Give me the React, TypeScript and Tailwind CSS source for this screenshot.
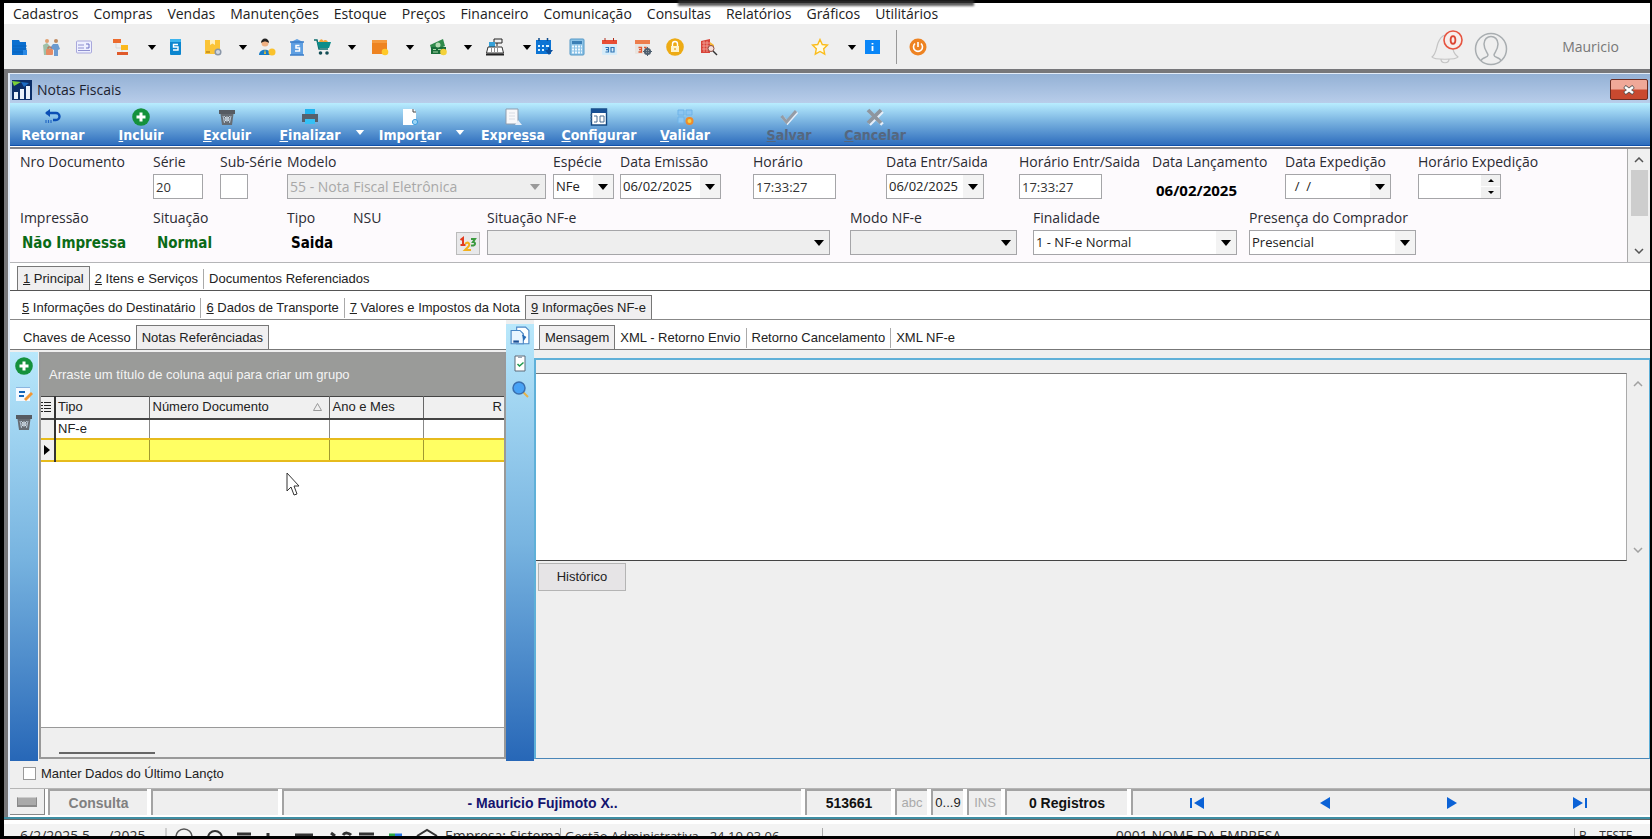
import { useState, type ReactNode } from 'react';
import { clsx } from 'clsx';

const menus = [
    'Cadastros', 'Compras', 'Vendas', 'Manutenções', 'Estoque', 'Preços',
    'Financeiro', 'Comunicação', 'Consultas', 'Relatórios', 'Gráficos', 'Utilitários',
];

const uiFont = "font-['Open_Sans','Noto_Sans',sans-serif]";
const sansFont = "font-['Liberation_Sans',Arial,sans-serif]";
const boldFont = "font-['DejaVu_Sans_Condensed','DejaVu_Sans',sans-serif]";

function Svg({ children, className = 'size-[18px]' }: { children: ReactNode; className?: string }) {
    return (
        <svg viewBox="0 0 18 18" className={clsx('block shrink-0', className)} fill="none" aria-hidden="true">
            {children}
        </svg>
    );
}

function Arrow({ className = 'text-black', small = false }: { className?: string; small?: boolean }) {
    return (
        <svg viewBox={small ? '-1 0 12 6' : '0 0 10 6'} className={clsx('block w-[10px] shrink-0', small ? 'h-[5px]' : 'h-[6px]', className)} aria-hidden="true">
            <path d="M0 0h10L5 6z" fill="currentColor" />
        </svg>
    );
}

const icons = {
    folder: <Svg><path d="M2 2h7l1 2h6v13H2z" fill="#0a6fd0" /><path d="M3 8h14M3 11h14M3 14h14" stroke="#0b5bb0" strokeWidth=".7" /><path d="M13 12h4v5h-4z" fill="#2b8ae6" /></Svg>,
    people: <Svg><circle cx="5" cy="3" r="2" fill="#e0a070" /><circle cx="14" cy="3" r="2" fill="#c08a60" /><path d="M1 7l4-2 3 3v3H6v6H2z" fill="#9fc0a8" /><path d="M11 6h5l2 5-2 1v6h-4v-6l-4-2z" fill="#6d9bd0" /><rect x="4" y="11" width="7" height="6" rx="1" fill="#e78b63" /><path d="M6 11V9h3v2" stroke="#b9674a" /></Svg>,
    card: <Svg><rect x="1.5" y="3" width="15" height="12" rx="1" fill="#eef0ff" stroke="#a9a8dc" /><path d="M3 7h6M3 10h6M3 12.500h12" stroke="#8f90d0" /><path d="M11 6h3v4h-3" stroke="#6f72c4" /></Svg>,
    tree: <Svg><path d="M4 4v6h6M10 10v6" stroke="#d9d9d9" /><rect x="1" y="1" width="8" height="4" fill="#ec6b2d" /><rect x="9" y="7" width="7" height="5" fill="#fbb81c" /><rect x="5" y="14" width="11" height="3" fill="#e05a2a" /></Svg>,
    phone: <Svg><rect x="4" y="1" width="11" height="16" rx="1" fill="#0c86cf" /><rect x="4" y="1" width="11" height="3" fill="#3cb4ee" /><path d="M12 6.500H7.500V9H12v3H7" stroke="#fff" strokeWidth="1.400" /></Svg>,
    box: <Svg><path d="M1 2h15v14H1z" fill="#fbc437" /><path d="M6 2h5v5L8.500 5.500 6 7z" fill="#fff0c0" /><path d="M3 13v2M5 13v2" stroke="#9a6a10" /><circle cx="14" cy="14" r="2.800" fill="#d3d9e2" stroke="#8a97a8" strokeWidth="1.500" /></Svg>,
    person: <Svg><circle cx="7" cy="5" r="3.500" fill="#efb184" /><path d="M3 5c0-6 8-6 8 0-3-2-5-2-8 0z" fill="#222" /><path d="M1 17c0-7 12-7 12 0z" fill="#147bc8" /><path d="M7 11l-1 5h2z" fill="#f2c430" /><circle cx="14" cy="14" r="3.500" fill="#fac22c" /></Svg>,
    bank: <Svg><path d="M3 4l6-3 6 3v13H3z" fill="#5e9fe2" /><path d="M2 4h14M2 17h14" stroke="#3c7fc9" strokeWidth="1.500" /><path d="M11.500 7.500H8V10h3.500v3H7" stroke="#fff" strokeWidth="1.500" /></Svg>,
    cart: <Svg><path d="M1 2h3l2 9h9" stroke="#0d6d6d" strokeWidth="1.500" /><path d="M4 4h14l-2 6H6z" fill="#0d8d8a" /><path d="M6 4c1-4 4-3 4-1 2-2 4-1 5 1z" fill="#f2a33a" /><circle cx="7.500" cy="15" r="1.800" fill="#134d55" /><circle cx="14" cy="15" r="1.800" fill="#134d55" /></Svg>,
    note: <Svg><rect x="1" y="2" width="15" height="14" fill="#ee8320" /><path d="M1 2h15v3H1z" fill="#f59a3e" /><circle cx="14" cy="14" r="3.300" fill="#ffc928" /></Svg>,
    money: <Svg><path d="M1 7l13-6 2 7-13 6z" fill="#2f8a4b" /><path d="M2 9h15v7H2z" fill="#186d39" /><circle cx="9" cy="7" r="2.500" fill="#b3dbb2" /><path d="M4 11.500h3M4 14h5M9 11.500h3" stroke="#a9d8a8" /><circle cx="14.500" cy="14" r="3.300" fill="#f3d13a" /></Svg>,
    register: <Svg><path d="M8 1h8v4H8zM11 5v3" stroke="#222" /><path d="M3 4h6v6H3z" fill="#35a1d9" /><path d="M2 9h14l1.500 6H.5z" fill="#fff" stroke="#333" /><path d="M5 11h1M8 11h1M11 11h1M5 13h1M8 13h1M11 13h1" stroke="#222" /><path d="M0 16.500h18" stroke="#222" strokeWidth="2" /></Svg>,
    calendar: <Svg><path d="M1 2h15v14H1z" fill="#0c74d4" /><path d="M4 0v3M12.500 0v3" stroke="#0a4a8c" strokeWidth="1.500" /><path d="M3 7h2v2H3zM7 7h2v2H7zM11 7h3v2h-3zM3 11h2v2H3zM7 11h2v2H7z" fill="#d9f1ff" /><path d="M10 12h3V9.500h2V12h3l-4 5z" fill="#0b4f9d" /></Svg>,
    calc: <Svg><rect x="2" y="1" width="14" height="16" rx="1" fill="#8cc2e6" stroke="#5599c7" /><rect x="4" y="3" width="10" height="3" fill="#3b7fb6" /><path d="M4 8.500h10M4 11.500h10M4 14.500h10" stroke="#eef8ff" strokeWidth="1.800" strokeDasharray="2 1" /></Svg>,
    cal30: <Svg><rect x="1" y="2" width="15" height="15" rx="1" fill="#d6ecf9" /><path d="M1 2h15v4H1z" fill="#e84e35" /><path d="M4 0v3M12.500 0v3" stroke="#b22e1c" /><path d="M4.500 9.500h3v4.500h-3M5 11.700h2.500M10 9.500h3V14h-3z" stroke="#2e74b5" strokeWidth="1.200" /></Svg>,
    calGear: <Svg><rect x="1" y="2" width="15" height="14" rx="1" fill="#e9e4df" /><path d="M1 2h15v4H1z" fill="#ed7d4b" /><path d="M4.500 9.500h3v4.500h-3M5 11.700h2.500M10 9.500h2V12" stroke="#e4572e" strokeWidth="1.300" /><circle cx="13.500" cy="13.500" r="2.500" stroke="#4f6070" strokeWidth="2.200" /><path d="M13.500 9v9M9 13.500h9" stroke="#4f6070" strokeWidth="1" /></Svg>,
    lock: <Svg><circle cx="9" cy="9" r="8.800" fill="#edab15" /><rect x="5" y="8" width="8" height="6" fill="#fff3c9" /><path d="M6.500 8V6a2.500 2.500 0 015 0v2" stroke="#fff" strokeWidth="1.400" /><path d="M9 10v2" stroke="#d69305" /></Svg>,
    search: <Svg><path d="M1 3l9-2v14H1z" fill="#d8453a" /><path d="M2 5h8M2 8h8M2 11h8M4 3v11M7 3v11" stroke="#f6aaa0" strokeWidth=".8" /><path d="M10 4l4 3v3h-4z" fill="#f7b632" /><circle cx="11" cy="10.500" r="3" fill="#f7ded9" stroke="#8a4a40" /><path d="M13 13l4 4" stroke="#333" strokeWidth="1.500" /></Svg>,
    star: <Svg><path d="M9 1.500l2.300 5 5.200.6-3.800 3.700 1 5.400L9 13.500l-4.700 2.700 1-5.400L1.500 7.100l5.200-.6z" fill="#fffbe6" stroke="#fbbc1b" strokeWidth="1.400" /></Svg>,
    info: <Svg><rect x="1" y="2" width="15" height="14" fill="#0a86f7" /><path d="M8.500 5v1.600M8.500 8v5" stroke="#fff" strokeWidth="1.800" /></Svg>,
    power: <Svg><circle cx="9" cy="9" r="8.500" fill="#ee8322" /><path d="M6 5.500a4.500 4.500 0 106 0" stroke="#fff" strokeWidth="1.600" /><path d="M9 4v5" stroke="#fff" strokeWidth="1.600" /></Svg>,
    undo: <Svg><path d="M2 5h10a3.500 3.500 0 010 7H9" stroke="#0b4eb5" strokeWidth="2.400" /><path d="M6 1L1 5l5 4z" fill="#0b4eb5" /><path d="M2 12v3M4.500 12v3M7 12v3" stroke="#2468c4" strokeWidth="1.200" /></Svg>,
    plus: <Svg><circle cx="9" cy="9" r="8.800" fill="#15913c" /><path d="M9 4.500v9M4.500 9h9" stroke="#fff" strokeWidth="3" /></Svg>,
    trash: <Svg><rect x="1" y="2" width="16" height="4" fill="#565b62" /><path d="M2.500 6h13L14 17H4z" fill="#666c73" /><path d="M5 8l1.500 7M13 8l-1.500 7M6 8l6 6M12 8l-6 6" stroke="#b5c4d2" /><circle cx="9" cy="11" r="2" stroke="#dfe9f2" /></Svg>,
    printer: <Svg><path d="M4 1h10v5H4z" fill="#22b4ee" /><path d="M1 6h16v8H1z" fill="#56606b" /><path d="M4 11h10v5H4z" fill="#35c0f5" /></Svg>,
    page: <Svg><path d="M2 1h11l2 3v13H2z" fill="#fff" /><path d="M12 1v3h3" stroke="#444" /><circle cx="14" cy="14" r="2.600" fill="#9bd4f5" stroke="#3b9bdc" /></Svg>,
    sheet: <Svg><path d="M2 1h12v15H2z" fill="#f8f8fa" stroke="#8f9dae" /><path d="M5 5h6M5 8h6M5 11h6" stroke="#d8dce4" /><path d="M11 17l3-5 4 5z" fill="#e6eef8" /></Svg>,
    config: <Svg><rect x="1.500" y="1" width="15" height="16" fill="#fff" stroke="#10457f" strokeWidth="1.400" /><path d="M1 1h16v4H1z" fill="#174f93" /><path d="M4 8h3v6H4M10 8h4v6h-4zM0 7h2M0 10h2M0 13h2" stroke="#4c6f93" /></Svg>,
    validate: <Svg><path d="M2 2h6v5H2zM10 2h6v5h-6zM2 9h6v6H2z" fill="#8cc6f2" stroke="#6fb3e8" /><circle cx="13.500" cy="13" r="3" fill="#f6d34a" stroke="#ef8b2a" strokeWidth="2" /></Svg>,
    check: <Svg><path d="M2.500 9l5 6L17 4" stroke="#e4eefa" strokeWidth="3" /><path d="M1.500 8l5 6L16 3" stroke="#959ca5" strokeWidth="3" /></Svg>,
    cross: <Svg><path d="M3.500 3.500l13 13M16.500 3.500l-13 13" stroke="#e4eefa" strokeWidth="3.500" /><path d="M2 2l13 13M15 2L2 15" stroke="#8e969f" strokeWidth="3.800" /></Svg>,
    edit: <Svg><path d="M1 2h14v14H1z" fill="#f3f9ff" /><path d="M1 2.500h14" stroke="#8ab5e0" /><path d="M4 7h6M4 11h5" stroke="#1465b8" strokeWidth="1.800" /><path d="M9 14l7-7 2 2-7 7z" fill="#f29632" /></Svg>,
    copy: <Svg className="size-5"><path d="M6 1h8l3 3v12H6z" fill="#fff" stroke="#4a86c5" /><path d="M1 4h8l3 3v9H1z" fill="#eaf5ff" stroke="#4a86c5" /><path d="M3 14h5" stroke="#1a4e94" strokeWidth="2" /><path d="M11 8l3 2-2 3" fill="#2b6cb5" stroke="#2b6cb5" /></Svg>,
    clip: <Svg><path d="M4 2h10v15H4z" fill="#fff" stroke="#5c6b78" /><path d="M7 1h4v3H7z" fill="#9aa9b6" /><path d="M6.500 10l2 2 4-3.500" stroke="#1f9a4d" strokeWidth="1.500" /></Svg>,
    lens: <Svg><path d="M12 12l5 5" stroke="#e4b24a" strokeWidth="2" /><circle cx="8" cy="8" r="6" fill="#48a2f5" stroke="#3a6fae" strokeWidth="1.500" /></Svg>,
};

type IconName = keyof typeof icons;

const tools: { icon: IconName | 'arrow'; label: string; gap: string }[] = [
    { icon: 'folder', label: 'Empresas', gap: 'ml-1.5' },
    { icon: 'people', label: 'Clientes', gap: 'ml-3.5' },
    { icon: 'card', label: 'Cartões', gap: 'ml-[15px]' },
    { icon: 'tree', label: 'Centros', gap: 'ml-[19px]' },
    { icon: 'arrow', label: 'Mais centros', gap: 'ml-[17px]' },
    { icon: 'phone', label: 'Cobrança', gap: 'ml-[9px]' },
    { icon: 'box', label: 'Produtos', gap: 'ml-5' },
    { icon: 'arrow', label: 'Mais produtos', gap: 'ml-4' },
    { icon: 'person', label: 'Vendedores', gap: 'ml-2.5' },
    { icon: 'bank', label: 'Bancos', gap: 'ml-3' },
    { icon: 'cart', label: 'Pedidos', gap: 'ml-[7px]' },
    { icon: 'arrow', label: 'Mais pedidos', gap: 'ml-4' },
    { icon: 'note', label: 'Notas', gap: 'ml-3.5' },
    { icon: 'arrow', label: 'Mais notas', gap: 'ml-4' },
    { icon: 'money', label: 'Pagamentos', gap: 'ml-3.5' },
    { icon: 'arrow', label: 'Mais pagamentos', gap: 'ml-4' },
    { icon: 'register', label: 'Caixa', gap: 'ml-[13px]' },
    { icon: 'arrow', label: 'Mais caixa', gap: 'ml-[18px]' },
    { icon: 'calendar', label: 'Agenda', gap: 'ml-[3px]' },
    { icon: 'calc', label: 'Calculadora', gap: 'ml-[15px]' },
    { icon: 'cal30', label: 'Calendário', gap: 'ml-[15px]' },
    { icon: 'calGear', label: 'Configurar calendário', gap: 'ml-[15px]' },
    { icon: 'lock', label: 'Bloquear', gap: 'ml-3.5' },
    { icon: 'search', label: 'Pesquisar', gap: 'ml-4' },
    { icon: 'star', label: 'Favoritos', gap: 'ml-[93px]' },
    { icon: 'arrow', label: 'Mais favoritos', gap: 'ml-[18px]' },
    { icon: 'info', label: 'Informações', gap: 'ml-[7px]' },
];

const actions: { icon: IconName; text: [string, string, string]; box: string; disabled?: boolean; menu?: boolean }[] = [
    { icon: 'undo', text: ['Retornar', '', ''], box: 'w-[86px]' },
    { icon: 'plus', text: ['', 'I', 'ncluir'], box: 'ml-0.5 w-[86px]' },
    { icon: 'trash', text: ['', 'E', 'xcluir'], box: 'w-[86px]' },
    { icon: 'printer', text: ['', 'F', 'inalizar'], box: 'w-20', menu: true },
    { icon: 'page', text: ['Impor', 't', 'ar'], box: 'w-20', menu: true },
    { icon: 'sheet', text: ['Expre', 's', 'sa'], box: 'w-[86px]' },
    { icon: 'config', text: ['', 'C', 'onfigurar'], box: 'w-[86px]' },
    { icon: 'validate', text: ['', 'V', 'alidar'], box: 'w-[86px]' },
    { icon: 'check', text: ['', 'S', 'alvar'], box: 'ml-[18px] w-[86px]', disabled: true },
    { icon: 'cross', text: ['', 'C', 'ancelar'], box: 'w-[86px]', disabled: true },
];

function Field({ id, label, box, children }: { id: string; label: string; box: string; children?: ReactNode }) {
    return (
        <div className={clsx('flex shrink-0 flex-col', box)}>
            <label htmlFor={id} className="block h-[22px] whitespace-nowrap leading-5">{label}</label>
            {children}
        </div>
    );
}

function TextBox({ id, value = '', width }: { id: string; value?: string; width: string }) {
    return (
        <input id={id} defaultValue={value}
            className={clsx('h-[25px] border border-[#a5a5a8] bg-white px-0.5 text-[13px] text-[#333] outline-none', width)} />
    );
}

function Select({ id, value = '', width, muted = false, disabled = false }:
    { id: string; value?: string; width: string; muted?: boolean; disabled?: boolean }) {
    return (
        <div className={clsx('relative h-[25px]', width)}>
            <select id={id} disabled={disabled}
                className={clsx(
                    'block size-full appearance-none border border-[#a5a5a8] px-0.5 outline-none',
                    muted ? 'bg-[#eee]' : 'bg-white',
                    disabled ? 'text-sm text-[#a8a8a8] opacity-100' : 'text-[13px] text-[#222]'
                )}>
                <option>{value}</option>
            </select>
            <span className={clsx('pointer-events-none absolute inset-y-px right-px flex w-5 items-center justify-center', !muted && 'bg-[#f3f3f3]')}>
                <Arrow className={disabled ? 'text-[#999]' : 'text-black'} />
            </span>
        </div>
    );
}

function TabStrip({ tabs, active, line, className }:
    { tabs: [string, string][]; active: number; line: string; className?: string }) {
    const [current, setCurrent] = useState(active);
    return (
        <div role="tablist" className={clsx('flex items-end border-b bg-white', line, sansFont, className)}>
            {tabs.map(([key, name], index) => (
                <button key={name} role="tab" aria-selected={index === current} onClick={() => setCurrent(index)}
                    className={clsx(
                        'h-6 whitespace-nowrap px-[5px] pt-px text-[13px] leading-5 text-[#222]',
                        index === current
                            ? 'border-l border-r border-t border-[#777] bg-[#f0eff0]'
                            : 'border-t border-transparent'
                    )}>
                    <span className={clsx('block', index !== current && index + 1 !== current && index < tabs.length - 1 && 'border-r border-[#aaa] pr-[5px] -mr-[5px]')}>
                        {key && <u>{key}</u>}{key && ' '}{name}
                    </span>
                </button>
            ))}
        </div>
    );
}

function IconButton({ icon, label }: { icon: IconName; label: string }) {
    return <button aria-label={label} className="block">{icons[icon]}</button>;
}

function Chevron({ up = false }: { up?: boolean }) {
    return (
        <svg viewBox="0 0 10 6" className="h-[6px] w-[10px]" fill="none" stroke="#555" strokeWidth="1.500" aria-hidden="true">
            <path d={up ? 'M1 5l4-4 4 4' : 'M1 1l4 4 4-4'} />
        </svg>
    );
}

function AppToolbar() {
    return (
        <div className="flex h-[45px] shrink-0 items-center bg-[#efefef] pt-px">
            {tools.map(tool => (
                <button key={tool.label} aria-label={tool.label} className={clsx('shrink-0', tool.gap)}>
                    {tool.icon === 'arrow' ? <Arrow small /> : icons[tool.icon]}
                </button>
            ))}
            <div className="ml-3.5 h-[34px] w-px bg-[#999]" />
            <button aria-label="Sair" className="ml-3">{icons.power}</button>
            <div className="ml-auto flex items-center gap-2.5 pr-[31px]">
                <button aria-label="Notificações">
                    <svg viewBox="0 0 34 36" className="h-9 w-[34px]" fill="none">
                        <path d="M2 28c4-3 4-8 6-14 2-5 4-7 7-8 5 1 6 4 7 9 1 7 2 10 6 13-2 3-24 3-26 0z" stroke="#c4c4c4" strokeWidth="1.200" />
                        <path d="M11 30c0 5 8 5 8 0" stroke="#c4c4c4" strokeWidth="1.200" />
                        <circle cx="23" cy="11" r="9" fill="#f7eeec" stroke="#e65440" strokeWidth="1.600" />
                        <ellipse cx="23" cy="11" rx="2.400" ry="3.800" stroke="#dc4532" strokeWidth="1.800" />
                    </svg>
                </button>
                <button aria-label="Usuário" className="mt-1">
                    <svg viewBox="0 0 34 34" className="size-[34px]" fill="none" stroke="#a8adb0" strokeWidth="1.500">
                        <circle cx="17" cy="17" r="15.500" />
                        <path d="M7 29c1-4 7-3 7-6 0-2-4-5-4-11 0-10 14-10 14 0 0 6-4 9-4 11 0 3 6 2 7 6" />
                    </svg>
                </button>
                <span className="ml-11 text-sm text-[#777]">Mauricio</span>
            </div>
        </div>
    );
}

function DocumentForm() {
    return (
        <div className="flex h-[116px] shrink-0 border-b border-t-2 border-b-[#b5b5b8] border-t-[#85858a] bg-[#fdfafd] text-sm text-[#2b2b33]">
            <div className="min-w-0 flex-1 overflow-hidden border-r border-[#aaa] pl-2.5 pt-[3px]">
                <div className="flex h-14">
                    <Field id="nro" label="Nro Documento" box="w-[133px]" />
                    <Field id="serie" label="Série" box="w-[67px]"><TextBox id="serie" value="20" width="w-[50px]" /></Field>
                    <Field id="subserie" label="Sub-Série" box="w-[67px]"><TextBox id="subserie" width="w-7" /></Field>
                    <Field id="modelo" label="Modelo" box="w-[266px]">
                        <Select id="modelo" value="55 - Nota Fiscal Eletrônica" width="w-[259px]" muted disabled />
                    </Field>
                    <Field id="especie" label="Espécie" box="w-[67px]"><Select id="especie" value="NFe" width="w-[61px]" /></Field>
                    <Field id="emissao" label="Data Emissão" box="w-[133px]"><Select id="emissao" value="06/02/2025" width="w-[101px]" /></Field>
                    <Field id="horario" label="Horário" box="w-[133px]"><TextBox id="horario" value="17:33:27" width="w-[83px]" /></Field>
                    <Field id="entrada" label="Data Entr/Saida" box="w-[133px]"><Select id="entrada" value="06/02/2025" width="w-[98px]" /></Field>
                    <Field id="horaEntrada" label="Horário Entr/Saida" box="w-[133px]"><TextBox id="horaEntrada" value="17:33:27" width="w-[83px]" /></Field>
                    <Field id="lancamento" label="Data Lançamento" box="w-[133px]">
                        <output id="lancamento" className="pl-1 pt-1.5 text-[15px] font-bold leading-5 text-black">06/02/2025</output>
                    </Field>
                    <Field id="expedicao" label="Data Expedição" box="w-[133px]"><Select id="expedicao" value={'\u00a0\u00a0/\u00a0\u00a0/'} width="w-[106px]" /></Field>
                    <Field id="horaExp" label="Horário Expedição" box="w-[133px]">
                        <div className="flex h-[25px] w-[83px] border border-[#a5a5a8] bg-white">
                            <input id="horaExp" className="min-w-0 flex-1 bg-transparent outline-none" />
                            <div className="flex w-[19px] flex-col gap-px bg-white text-black">
                                <button aria-label="Aumentar" className="flex flex-1 items-center justify-center bg-[#f0f0f0]">
                                    <svg viewBox="0 0 6 3" className="h-[3px] w-[6px]"><path d="M0 3h6L3 0z" /></svg>
                                </button>
                                <button aria-label="Diminuir" className="flex flex-1 items-center justify-center bg-[#f0f0f0]">
                                    <svg viewBox="0 0 6 3" className="h-[3px] w-[6px]"><path d="M0 0h6L3 3z" /></svg>
                                </button>
                            </div>
                        </div>
                    </Field>
                </div>
                <div className="flex">
                    <Field id="impressao" label="Impressão" box="w-[133px]">
                        <output id="impressao" className={clsx('w-[110px] overflow-hidden whitespace-nowrap pl-0.5 pt-[3px] text-[15px] font-bold leading-5 text-[#0a6b17]', boldFont)}>Não Impressa</output>
                    </Field>
                    <Field id="situacao" label="Situação" box="w-[134px]">
                        <output id="situacao" className={clsx('pl-1 pt-[3px] text-[15px] font-bold leading-5 text-[#0a6b17]', boldFont)}>Normal</output>
                    </Field>
                    <Field id="tipo" label="Tipo" box="w-[66px]">
                        <output id="tipo" className={clsx('pl-1 pt-[3px] text-[15px] font-bold leading-5 text-black', boldFont)}>Saida</output>
                    </Field>
                    <Field id="nsu" label="NSU" box="w-[103px]" />
                    <div className="w-[31px] shrink-0 pt-6">
                        <button aria-label="Numeração" className="flex h-[23px] w-6 items-center justify-center border border-[#bbb] bg-[#e8e8ea]">
                            <Svg>
                                <path d="M1.500 5L4 3v7M1.500 10h5" stroke="#e23a1e" strokeWidth="2" />
                                <path d="M6 9c3-3 6 0 3 3l-3 3h6" stroke="#f3b01b" strokeWidth="2" />
                                <path d="M12 4h4l-2 3c3 0 3 4-2 3.500" stroke="#3b9a3f" strokeWidth="2" />
                            </Svg>
                        </button>
                    </div>
                    <Field id="situacaoNfe" label="Situação NF-e" box="w-[363px]"><Select id="situacaoNfe" width="w-[343px]" muted /></Field>
                    <Field id="modo" label="Modo NF-e" box="w-[183px]"><Select id="modo" width="w-[167px]" muted /></Field>
                    <Field id="finalidade" label="Finalidade" box="w-[216px]"><Select id="finalidade" value="1 - NF-e Normal" width="w-[204px]" /></Field>
                    <Field id="presenca" label="Presença do Comprador" box="w-[180px]"><Select id="presenca" value="Presencial" width="w-[167px]" /></Field>
                </div>
            </div>
            <div className="flex w-[22px] shrink-0 flex-col items-center bg-[#f0f0f0]">
                <span className="flex h-[21px] items-center"><Chevron up /></span>
                <span className="h-[46px] w-[17px] bg-[#cdcdcd]" />
                <span className="mt-auto flex h-[22px] items-center"><Chevron /></span>
            </div>
        </div>
    );
}

function ReferencedNotes() {
    return (
        <div className="flex w-[496px] shrink-0 flex-col">
            <TabStrip tabs={[['', 'Chaves de Acesso'], ['', 'Notas Referênciadas']]} active={1} line="border-[#777]" className="h-[30px] shrink-0 pl-2" />
            <div className="flex min-h-0 flex-1 pt-0.5">
                <div className="flex w-7 shrink-0 flex-col items-center gap-2.5 bg-linear-to-b from-[#b9e8fb] via-[#78b4e0] to-[#2767b7] pt-[5px]">
                    <IconButton icon="plus" label="Incluir nota" />
                    <IconButton icon="edit" label="Editar nota" />
                    <IconButton icon="trash" label="Excluir nota" />
                </div>
                <div className={clsx('mb-0.5 ml-px flex min-w-0 flex-1 flex-col border-2 border-[#999] bg-white text-[13px] text-[#222]', sansFont)}>
                    <div className="flex h-[42px] shrink-0 items-center bg-[#9a9b99] pl-2 text-[#f4f4f4]">
                        Arraste um título de coluna aqui para criar um grupo
                    </div>
                    <table className="w-full table-fixed border-collapse text-left leading-[18px]">
                        <colgroup>
                            <col className="w-[14px]" />
                            <col className="w-[94px]" />
                            <col className="w-[180px]" />
                            <col className="w-[94px]" />
                            <col />
                        </colgroup>
                        <thead>
                            <tr className="h-[22px] border-b-2 border-t border-[#444] bg-[#f0f0f0]">
                                <th className="border-r-2 border-[#333] p-0">
                                    <svg viewBox="0 0 10 12" className="h-3 w-[10px]" stroke="#222"><path d="M0 1.500h2M3 1.500h7M0 4.500h2M3 4.500h7M0 7.500h2M3 7.500h7M0 10.500h2M3 10.500h7" /></svg>
                                </th>
                                <th className="border-r border-[#666] px-0.5 py-0 font-normal">Tipo</th>
                                <th className="border-r border-[#666] px-[3px] py-0 font-normal">
                                    <span className="flex items-center justify-between pr-1">
                                        Número Documento
                                        <svg viewBox="0 0 9 8" className="h-2 w-[9px]" fill="none" stroke="#999"><path d="M.5 7.500h8l-4-7z" /></svg>
                                    </span>
                                </th>
                                <th className="border-r border-[#666] px-[3px] py-0 font-normal">Ano e Mes</th>
                                <th className="px-0.5 py-0 text-right font-normal">R</th>
                            </tr>
                        </thead>
                        <tbody>
                            <tr className="h-5">
                                <td className="border-r-2 border-[#333] bg-[#f0f0f0] p-0" />
                                <td className="border-r border-[#888] px-0.5 py-0">NF-e</td>
                                <td className="border-r border-[#888] p-0" />
                                <td className="border-r border-[#888] p-0" />
                                <td className="p-0" />
                            </tr>
                            <tr className="h-[22px] border-b-2 border-t-2 border-[#e6bb1c] bg-[#ffff63]">
                                <td className="border-r-2 border-[#333] bg-[#f0f0f0] p-0 pl-[3px]">
                                    <svg viewBox="0 0 6 10" className="h-[10px] w-[6px]"><path d="M0 0l6 5-6 5z" /></svg>
                                </td>
                                <td className="border-r border-[#a09a30] p-0" />
                                <td className="border-r border-[#a09a30] p-0" />
                                <td className="border-r border-[#a09a30] p-0" />
                                <td className="p-0" />
                            </tr>
                        </tbody>
                    </table>
                    <div className="mt-auto flex h-[30px] items-end border-t border-[#999] bg-[#efefef] pb-[3px] pl-[18px]">
                        <div className="h-0.5 w-24 bg-[#666]" />
                    </div>
                </div>
            </div>
        </div>
    );
}

function MessagePane() {
    return (
        <div className="flex min-w-0 flex-1 flex-col bg-[#efefef]">
            <TabStrip tabs={[['', 'Mensagem'], ['', 'XML - Retorno Envio'], ['', 'Retorno Cancelamento'], ['', 'XML NF-e']]}
                active={0} line="border-[#777]" className="h-[30px] shrink-0 pl-[5px]" />
            <div className="mb-0.5 mt-2 flex flex-1 flex-col border-2 border-b border-r border-[#5fb0d8] border-b-[#4a86b8]">
                <div className="h-[13px] shrink-0" />
                <div className="flex h-[188px] shrink-0">
                    <textarea aria-label="Mensagem" className="block min-w-0 flex-1 resize-none border-b border-r border-t border-b-[#444] border-r-[#aaa] border-t-[#777] bg-white p-1 text-[13px] outline-none" />
                    <div className="flex w-[22px] shrink-0 flex-col items-center justify-between py-2 opacity-50">
                        <Chevron up />
                        <Chevron />
                    </div>
                </div>
                <button className={clsx('ml-0.5 mt-0.5 h-7 w-[88px] border border-[#b4b4b4] bg-[#e6e4e6] text-[13px] text-[#222]', sansFont)}>
                    Histórico
                </button>
            </div>
        </div>
    );
}

const statusCell = 'flex shrink-0 items-center justify-center border-l-2 border-t-2 border-[#a3a3a3]';

function StatusBar() {
    return (
        <div className={clsx('flex h-[29px] shrink-0 gap-1 border-t border-[#b5b5b5] bg-white pb-0.5 text-sm font-bold', sansFont)}>
            <button aria-label="Teclado" className="flex w-[35px] items-center justify-center border-b border-r border-[#888] bg-[#efefef]">
                <span className="h-[10px] w-5 border border-b-2 border-[#8a8a8a] border-t-[#ccc] bg-[#aaa]" />
            </button>
            <div className={clsx(statusCell, '-ml-px w-[99px] bg-[#efefef] text-[#808080]')}>Consulta</div>
            <div className={clsx(statusCell, 'w-[127px] bg-[#efefef]')} />
            <div className={clsx(statusCell, 'w-[500px] grow bg-[#efefef] text-[#14146e]')}>- Mauricio Fujimoto X..</div>
            <div className={clsx(statusCell, 'w-[86px] bg-[#efefef] text-[#111]')}>513661</div>
            <div className={clsx(statusCell, 'w-8 bg-[#efefef] text-[13px] font-normal text-[#aaa]')}>abc</div>
            <div className={clsx(statusCell, 'w-8 bg-[#efefef] text-[13px] font-normal text-[#222]')}>0...9</div>
            <div className={clsx(statusCell, 'w-[34px] bg-[#efefef] text-[13px] font-normal text-[#aaa]')}>INS</div>
            <div className={clsx(statusCell, 'w-[122px] bg-[#efefef] text-[#111]')}>0 Registros</div>
            <div className="grid w-[519px] shrink-0 grid-cols-4 items-center justify-items-center border-l-2 border-t-2 border-[#a3a3a3] bg-[#efefef] pr-1.5 text-[#0b62d6]">
                <button aria-label="Primeiro"><svg viewBox="0 0 16 12" className="h-3 w-4" fill="currentColor"><path d="M1 1h2v10H1zM15 0v12L5 6z" /></svg></button>
                <button aria-label="Anterior"><svg viewBox="0 0 16 12" className="h-3 w-4" fill="currentColor"><path d="M13 0v12L3 6z" /></svg></button>
                <button aria-label="Próximo"><svg viewBox="0 0 16 12" className="h-3 w-4" fill="currentColor"><path d="M3 0v12l10-6z" /></svg></button>
                <button aria-label="Último"><svg viewBox="0 0 16 12" className="h-3 w-4" fill="currentColor"><path d="M1 0v12l10-6zM13 1h2v10h-2z" /></svg></button>
            </div>
        </div>
    );
}

function Taskbar() {
    return (
        <div className="flex h-3 shrink-0 items-start overflow-hidden whitespace-nowrap bg-[#f3f3f3] pt-1 text-sm leading-4 text-[#333]">
            <span className="w-[161px] shrink-0 pl-4">6/2/2025 5.... /2025</span>
            <svg viewBox="0 0 280 12" className="h-3 w-[280px] shrink-0" fill="none" stroke="#333" strokeWidth="2">
                <path d="M1 0v12" stroke="#aaa" strokeWidth="1" />
                <circle cx="19" cy="9" r="8" stroke="#555" strokeWidth="1.500" />
                <circle cx="50" cy="10" r="7" />
                <path d="M72 6h14M103 5v5M130 7h18M166 5l4 3M178 7c2-3 6-2 8 0M194 6h15" strokeWidth="3" />
                <path d="M224 7h6" stroke="#28a745" strokeWidth="3" /><path d="M230 7h7" stroke="#2672e0" strokeWidth="3" />
                <path d="M252 8l10-6 10 6" />
            </svg>
            <span className="w-[115px] shrink-0">Empresa: Sistema</span>
            <span className="w-[262px] shrink-0 border-l border-[#aaa] pl-1 text-[13px]">Gestão Administrativa - 24.10.03.06</span>
            <span className="flex-1 border-l border-[#aaa] text-center">0001 NOME DA EMPRESA</span>
            <span className="w-[76px] shrink-0 border-l border-[#aaa] pl-1 text-xs leading-4">B... TESTE</span>
        </div>
    );
}

export default function App() {
    return (
        <div className={clsx('relative flex h-screen min-h-[640px] flex-col overflow-hidden bg-black pb-[3px] pl-1 pr-0.5 pt-[3px]', uiFont)}>
            <nav className="flex h-[21px] shrink-0 items-center gap-[15px] bg-white pl-[9px] pt-px text-sm text-[#222]">
                {menus.map(menu => <button key={menu} className="whitespace-nowrap">{menu}</button>)}
            </nav>
            <div className="pointer-events-none absolute left-[678px] top-0 h-[6px] w-[296px] bg-[#333]/80 blur-[1px]" />

            <AppToolbar />

            <main className="flex min-h-0 flex-1 flex-col border-l-4 border-t-4 border-[#77777a] bg-[#efefef]">
                <div className="flex min-h-0 flex-1 flex-col border-l-2 border-t border-[#e3ecf8]">
                    <header className="flex h-[29px] shrink-0 items-center bg-linear-to-b from-[#94b1d5] to-[#b8cdea] pl-0.5 pt-0.5">
                        <svg viewBox="0 0 20 20" className="size-5">
                            <path d="M0 0h20v20H0z" fill="#0c2f68" />
                            <path d="M0 1l9 1-7 4z" fill="#7bd038" /><path d="M9 2l8 1-5 4z" fill="#1b6cc4" />
                            <path d="M2 12h4v7H2zM8 9h4v10H8zM14 6h4v13h-4z" fill="#e9f2fb" />
                        </svg>
                        <h1 className="ml-[5px] text-sm text-[#1c2230]">Notas Fiscais</h1>
                        <button aria-label="Fechar" className="ml-auto mr-0.5 flex h-[21px] w-[38px] items-center justify-center rounded-[2px] border border-[#6b2c22] bg-linear-to-b from-[#f0a898] from-45% to-[#c9492f] to-55%">
                            <svg viewBox="0 0 12 10" className="h-[10px] w-3"><path d="M1.500 1.500l9 7M10.500 1.500l-9 7" stroke="#555" strokeWidth="4" /><path d="M2 2l8 6M10 2L2 8" stroke="#fff" strokeWidth="2.500" /></svg>
                        </button>
                    </header>

                    <div className="flex h-[43px] shrink-0 border-b border-[#0e4faa] bg-linear-to-b from-[#b9edff] via-[#71abdc] to-[#2e6dbd]">
                        {actions.map(action => (
                            <div key={action.icon} className="flex shrink-0">
                                <button disabled={action.disabled}
                                    className={clsx(
                                        'flex flex-col items-center pt-[5px] text-sm font-bold leading-[18px]',
                                        boldFont, action.box,
                                        action.disabled ? 'text-[#55677f]' : 'text-white'
                                    )}>
                                    {icons[action.icon]}
                                    <span>{action.text[0]}<u>{action.text[1]}</u>{action.text[2]}</span>
                                </button>
                                {action.menu && (
                                    <button aria-label="Mais opções" className="flex w-5 items-center justify-center pt-4">
                                        <Arrow className="text-white" small />
                                    </button>
                                )}
                            </div>
                        ))}
                    </div>

                    <div className="h-px shrink-0 bg-white" />
                    <DocumentForm />

                    <TabStrip tabs={[['1', 'Principal'], ['2', 'Itens e Serviços'], ['', 'Documentos Referenciados']]}
                        active={0} line="border-[#555]" className="h-7 shrink-0 pl-[7px]" />
                    <TabStrip tabs={[['5', 'Informações do Destinatário'], ['6', 'Dados de Transporte'], ['7', 'Valores e Impostos da Nota'], ['9', 'Informações NF-e']]}
                        active={3} line="border-[#888]" className="h-[29px] shrink-0 pl-[7px]" />

                    <div className="relative flex min-h-0 flex-1">
                        <ReferencedNotes />
                        <div className="mt-1 flex w-7 shrink-0 flex-col items-center gap-2 bg-linear-to-b from-[#b9e8fb] via-[#78b4e0] to-[#2767b7] pt-0.5">
                            <IconButton icon="copy" label="Copiar" />
                            <IconButton icon="clip" label="Conferir" />
                            <IconButton icon="lens" label="Localizar" />
                        </div>
                        <MessagePane />
                        <svg viewBox="0 0 14 24" className="absolute left-[276px] top-[152px] h-6 w-[14px]" fill="#fff" stroke="#333">
                            <path d="M1 1v18l4-4 3 8 3-1-3-8h5z" />
                        </svg>
                    </div>

                    <label className={clsx('flex h-[27px] shrink-0 items-center gap-[5px] pb-0.5 pl-[13px] text-[13px] text-[#222]', sansFont)}>
                        <input type="checkbox" className="size-[13px] appearance-none border border-[#999] bg-white" />
                        Manter Dados do Último Lançto
                    </label>

                    <StatusBar />
                </div>
            </main>
            <div className="h-[7px] shrink-0 border-b-4 border-t-2 border-b-white border-t-[#3f8ea3] bg-[#666]" />
            <Taskbar />
        </div>
    );
}
